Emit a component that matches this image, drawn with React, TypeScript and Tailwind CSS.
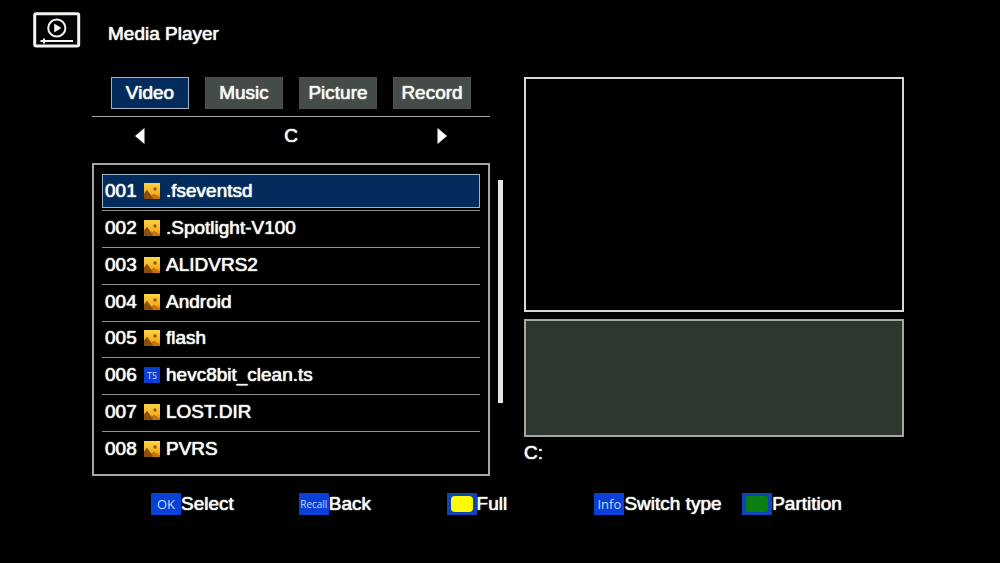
import { useState } from "react";

type Entry = { name: string; kind: "folder" | "ts" };

const tabs = ["Video", "Music", "Picture", "Record"];

const entries: Entry[] = [
  { name: ".fseventsd", kind: "folder" },
  { name: ".Spotlight-V100", kind: "folder" },
  { name: "ALIDVRS2", kind: "folder" },
  { name: "Android", kind: "folder" },
  { name: "flash", kind: "folder" },
  { name: "hevc8bit_clean.ts", kind: "ts" },
  { name: "LOST.DIR", kind: "folder" },
  { name: "PVRS", kind: "folder" },
];

function PlayerIcon() {
  return (
    <svg width="48" height="36" viewBox="0 0 48 36" fill="none" stroke="#f0f5ee" aria-hidden="true">
      <rect x="1.7" y="1.7" width="44" height="32.4" rx="1.5" strokeWidth="3" />
      <circle cx="23.8" cy="16" r="8.6" strokeWidth="2" />
      <path d="M21.2 11.6v8.8l7.2-4.4z" fill="#f0f5ee" stroke="none" />
      <path d="M7.5 29H40" strokeWidth="2" />
      <path d="M11 26.6v4.8" strokeWidth="2" />
    </svg>
  );
}

function FolderIcon() {
  return (
    <svg className="shrink-0" width="16" height="16" viewBox="0 0 16 16" aria-hidden="true">
      <defs>
        <linearGradient id="gold" x1="0" y1="0" x2="0" y2="1">
          <stop offset="0" stopColor="#fbd545" />
          <stop offset="0.65" stopColor="#f8b020" />
          <stop offset="1" stopColor="#dc8410" />
        </linearGradient>
      </defs>
      <rect width="16" height="16" fill="url(#gold)" />
      <path d="M0 10.5l3-3.7L7.5 13l2.5-2 3.5 5H0z" fill="#8a5009" />
      <path d="M8 12.8l2.4-1.8 5.6 3.6V16H9z" fill="#c5750c" />
      <circle cx="11" cy="6" r="1.7" fill="#8d5810" />
    </svg>
  );
}

function TsIcon() {
  return (
    <span className="flex size-4 shrink-0 items-center justify-center bg-[#0b3fd4] font-['Open_Sans',sans-serif] text-[9px] leading-none text-[#c8defa] text-shadow-none">
      TS
    </span>
  );
}

function Arrow({ direction }: { direction: "left" | "right" }) {
  return (
    <svg width="10" height="16" viewBox="0 0 10 16" fill="#fff" aria-hidden="true">
      <path d={direction === "left" ? "M9.5 0v16L0 8z" : "M.5 0v16L10 8z"} />
    </svg>
  );
}

function ColorKey({ color }: { color: "yellow" | "green" }) {
  return color === "yellow" ? (
    <span className="flex h-[22px] w-[30px] items-center justify-center bg-[#0d46b0]">
      <span className="h-4 w-[22px] rounded-sm bg-[#fdfb05]" />
    </span>
  ) : (
    <span className="flex h-[22px] w-[30px] items-center justify-center bg-[#0b45b8]">
      <span className="h-4 w-[22px] rounded-xs bg-[#0a7f14]" />
    </span>
  );
}

const keyCap =
  "flex h-[22px] w-[30px] items-center justify-center bg-[#0a3fd8] font-['Open_Sans',sans-serif] leading-none text-[#bcdcff] text-shadow-none";

const actions = [
  { label: "Select", cap: <span className={`${keyCap} text-[13px]`}>OK</span> },
  { label: "Back", cap: <span className={`${keyCap} text-[10px]`}>Recall</span> },
  { label: "Full", cap: <ColorKey color="yellow" /> },
  { label: "Switch type", cap: <span className={`${keyCap} text-[13px]`}>Info</span> },
  { label: "Partition", cap: <ColorKey color="green" /> },
];

export default function App() {
  const [tab, setTab] = useState("Video");
  const [selected, setSelected] = useState(0);

  return (
    <div className="min-h-screen bg-black pb-12 font-['Liberation_Sans',Arial,sans-serif] text-[19px] leading-6 text-[#f4f8f2] [text-shadow:0_0_1px_#f4f8f2,0_0_1px_#f4f8f2] [&_button]:[text-shadow:inherit]">
      <header className="flex items-start gap-[27px] pt-3 pl-[33px]">
        <PlayerIcon />
        <h1 className="pt-[10px]">Media Player</h1>
      </header>

      <main className="mt-[29px] grid grid-cols-[411fr_380fr] gap-[21px] pr-24 pl-[92px]">
        <section aria-label="Files">
          <div className="mr-[13px]">
            <div role="tablist" className="grid grid-cols-4 gap-4 border-b border-[#a3a8a2] px-[19px] pb-[7px]">
              {tabs.map((name) => (
                <button
                  key={name}
                  type="button"
                  role="tab"
                  aria-selected={name === tab}
                  onClick={() => setTab(name)}
                  className={
                    name === tab
                      ? "flex h-8 items-center justify-center border border-[#9db4c8] bg-[#032b5b]"
                      : "flex h-8 items-center justify-center border border-[#4a504b] bg-[#454c47]"
                  }
                >
                  {name}
                </button>
              ))}
            </div>
            <div className="flex h-[46px] items-center justify-between px-[43px] pb-2">
              <button type="button" aria-label="Previous partition">
                <Arrow direction="left" />
              </button>
              <span>C</span>
              <button type="button" aria-label="Next partition">
                <Arrow direction="right" />
              </button>
            </div>
          </div>

          <div className="flex gap-2">
            <div className="flex-1 border-2 border-[#a3a8a2] px-2 pt-[9px] pb-[5px]">
              <ul className="grid h-[295px] grid-rows-8">
                {entries.map((entry, i) => (
                  <li key={entry.name} className="border-b border-[#8d928c] pb-[2px] last:border-transparent">
                    <button
                      type="button"
                      onClick={() => setSelected(i)}
                      className={
                        i === selected
                          ? "flex h-full w-full items-center border border-[#9db4c8] bg-[#032b5b] pl-[2px] text-left"
                          : "flex h-full w-full items-center border border-transparent pl-[2px] text-left"
                      }
                    >
                      <span className="w-[39px]">{String(i + 1).padStart(3, "0")}</span>
                      {entry.kind === "ts" ? <TsIcon /> : <FolderIcon />}
                      <span className="ml-[6px]">{entry.name}</span>
                    </button>
                  </li>
                ))}
              </ul>
            </div>
            <div className="w-[5px] pt-[17px]">
              <div className="h-[223px] bg-[#e6e7e1]" />
            </div>
          </div>
        </section>

        <section aria-label="Preview">
          <div className="h-[235px] border-2 border-[#d5d8d3]" />
          <div className="mt-[7px] h-[118px] border-2 border-[#a3a8a2] bg-[#2e3630]" />
          <p className="mt-1">C:</p>
        </section>
      </main>

      <footer className="mt-4 grid grid-cols-5 pr-[110px] pl-[151px]">
        {actions.map(({ label, cap }) => (
          <button key={label} type="button" className="flex items-center whitespace-nowrap">
            {cap}
            <span>{label}</span>
          </button>
        ))}
      </footer>
    </div>
  );
}
